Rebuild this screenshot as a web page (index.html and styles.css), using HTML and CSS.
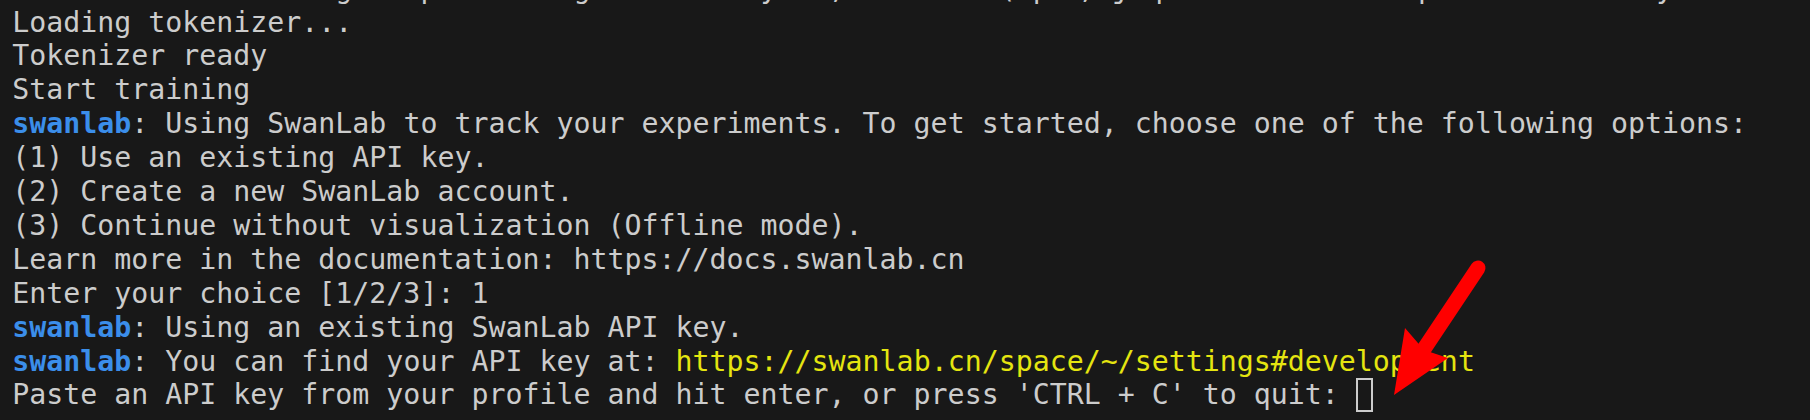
FILE: index.html
```html
<!DOCTYPE html>
<html>
<head>
<meta charset="utf-8">
<link rel="stylesheet" href="styles.css">
</head>
<body>
<div class="term">
<div class="line">Notice: the models goes past the gate and beyond, the next(ap上, j q uit the model path and tokeny ok.</div>
<div class="line">Loading tokenizer...</div>
<div class="line">Tokenizer ready</div>
<div class="line">Start training</div>
<div class="line"><span class="tag">swanlab</span>: Using SwanLab to track your experiments. To get started, choose one of the following options:</div>
<div class="line">(1) Use an existing API key.</div>
<div class="line">(2) Create a new SwanLab account.</div>
<div class="line">(3) Continue without visualization (Offline mode).</div>
<div class="line">Learn more in the documentation: https://docs.swanlab.cn</div>
<div class="line">Enter your choice [1/2/3]: 1</div>
<div class="line"><span class="tag">swanlab</span>: Using an existing SwanLab API key.</div>
<div class="line"><span class="tag">swanlab</span>: You can find your API key at: <span class="url">https://swanlab.cn/space/~/settings#development</span></div>
<div class="line">Paste an API key from your profile and hit enter, or press 'CTRL + C' to quit: <span class="cursor"></span></div>
</div>
<svg class="arrow" width="1810" height="420" viewBox="0 0 1810 420">
  <line x1="1478" y1="268" x2="1422" y2="352" stroke="#ff0000" stroke-width="15" stroke-linecap="round"/>
  <polygon points="1394,395 1405,328 1424,350 1448,358" fill="#ff0000"/>
</svg>
</body>
</html>
```
FILE: styles.css
```css
html, body {
  margin: 0;
  padding: 0;
  background: #181818;
  width: 1810px;
  height: 420px;
  overflow: hidden;
}
body {
  position: relative;
}
.term {
  margin-top: -28.3px;
  padding-left: 12.2px;
  font-family: "DejaVu Sans Mono", "Liberation Mono", "Noto Sans CJK SC", monospace;
  font-size: 28.25px;
  line-height: 33.9px;
  color: #cccccc;
}
.line {
  white-space: pre;
  height: 33.9px;
}
.tag {
  color: #3b8eea;
  font-weight: bold;
}
.url {
  color: #e5e510;
}
.cursor {
  display: inline-block;
  box-sizing: border-box;
  width: 17px;
  height: 33.9px;
  border: 2px solid #cccccc;
  vertical-align: top;
}
.arrow {
  position: absolute;
  left: 0;
  top: 0;
  pointer-events: none;
}
```
